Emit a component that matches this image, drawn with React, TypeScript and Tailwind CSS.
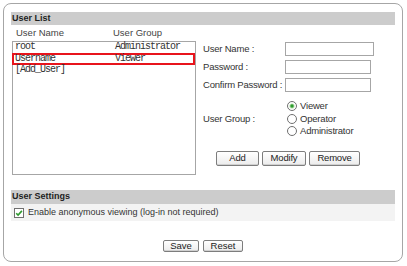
import React from "react";

const sans = { fontFamily: '"Liberation Sans", Arial, sans-serif' };
const mono = { fontFamily: '"Liberation Mono", "Courier New", monospace' };

function Radio({ checked }: { checked?: boolean }) {
  return (
    <svg width="10" height="10" viewBox="0 0 10 10" className="shrink-0">
      <circle cx="5" cy="5" r="4.5" fill="#ffffff" stroke="#6f6f6f" strokeWidth="1" />
      {checked ? (
        <>
          <circle cx="5" cy="5" r="2.6" fill="#b9e2b0" />
          <circle cx="5" cy="5" r="1.7" fill="#2f9a2f" />
        </>
      ) : null}
    </svg>
  );
}

function Btn({ label, width }: { label: string; width: string }) {
  return (
    <button
      className={`${width} flex h-full items-center justify-center rounded-[2px] border border-[#7d7d7d] bg-[linear-gradient(180deg,#ffffff_0%,#ececec_100%)] text-[9.5px] leading-none text-[#222] shadow-[inset_0_-1px_0_#d0d0d0]`}
      style={sans}
    >
      {label}
    </button>
  );
}

export default function App() {
  const users = [
    { name: "root", group: "Administrator" },
    { name: "Username", group: "Viewer", selected: true },
    { name: "[Add_User]", group: "" },
  ];

  return (
    <div className="h-[266px] w-[407px] bg-white p-[3px]" style={sans}>
      <div className="h-[259px] w-[400px] rounded-[8px] border border-[#a6a6a6] px-[7px] pt-[8px]">
        <div className="flex h-[13px] items-center bg-[#cccccc] pl-[1px] text-[9px] font-bold text-[#1e1e1e]">
          User List
        </div>

        <div className="flex">
          <div className="w-[185px]">
            <div className="flex h-[16px] items-center pl-[5px] text-[9.5px] text-[#444]">
              <span className="w-[97px]">User Name</span>
              <span>User Group</span>
            </div>
            <div className="ml-[1px] h-[134px] border border-[#a6a6a6]" style={mono}>
              {users.map((u) => (
                <div
                  key={u.name}
                  className={
                    u.selected
                      ? "-ml-[1px] flex h-[12px] items-center border-2 border-[#e8141c] text-[10px] leading-none tracking-[-1px] text-[#333]"
                      : "flex h-[10.5px] items-center pl-[2px] text-[10px] leading-none tracking-[-1px] text-[#333]"
                  }
                >
                  <span className={u.selected ? "w-[101px] pl-[1px]" : "w-[100px]"}>{u.name}</span>
                  <span>{u.group}</span>
                </div>
              ))}
            </div>
          </div>

          <div className="ml-[7px] flex-1 text-[9.5px] tracking-[-0.2px] text-[#333]">
            <div className="mt-[17px] flex h-[14px] items-center">
              <span className="w-[82px]">User Name :</span>
              <div className="h-full w-[89px] border border-[#a6a6a6] bg-white" />
            </div>
            <div className="mt-[4px] flex h-[14px] items-center">
              <span className="w-[82px]">Password :</span>
              <div className="h-full w-[86px] border border-[#a6a6a6] bg-white" />
            </div>
            <div className="mt-[4px] flex h-[14px] items-center">
              <span className="w-[82px]">Confirm Password :</span>
              <div className="h-full w-[86px] border border-[#a6a6a6] bg-white" />
            </div>
            <div className="mt-[8px] flex items-center">
              <span className="w-[84px]">User Group :</span>
              <div className="flex flex-col">
                {["Viewer", "Operator", "Administrator"].map((g, i) => (
                  <div key={g} className="flex h-[12.5px] items-center gap-[3px]">
                    <Radio checked={i === 0} />
                    <span>{g}</span>
                  </div>
                ))}
              </div>
            </div>
            <div className="ml-[13px] mt-[13px] flex h-[15px] gap-[3px]">
              <Btn label="Add" width="w-[43px]" />
              <Btn label="Modify" width="w-[44px]" />
              <Btn label="Remove" width="w-[51px]" />
            </div>
          </div>
        </div>

        <div className="mt-[15px] flex h-[14px] items-center bg-[#cccccc] pl-[1px] text-[9px] font-bold text-[#1e1e1e]">
          User Settings
        </div>
        <div className="flex h-[17px] items-center gap-[4px] bg-[#f3f3f3] pl-[3px] text-[9px] text-[#333]">
          <svg width="10" height="10" viewBox="0 0 10 10" className="shrink-0">
            <rect x="0.5" y="0.5" width="9" height="9" fill="#ffffff" stroke="#6f6f6f" />
            <path d="M2.2 5.2 L4.1 7.1 L7.9 2.9" fill="none" stroke="#2f9a2f" strokeWidth="1.6" />
          </svg>
          <span>Enable anonymous viewing (log-in not required)</span>
        </div>

        <div className="mt-[19px] flex h-[12px] justify-center gap-[4px]">
          <Btn label="Save" width="w-[36px]" />
          <Btn label="Reset" width="w-[40px]" />
        </div>
      </div>
    </div>
  );
}
